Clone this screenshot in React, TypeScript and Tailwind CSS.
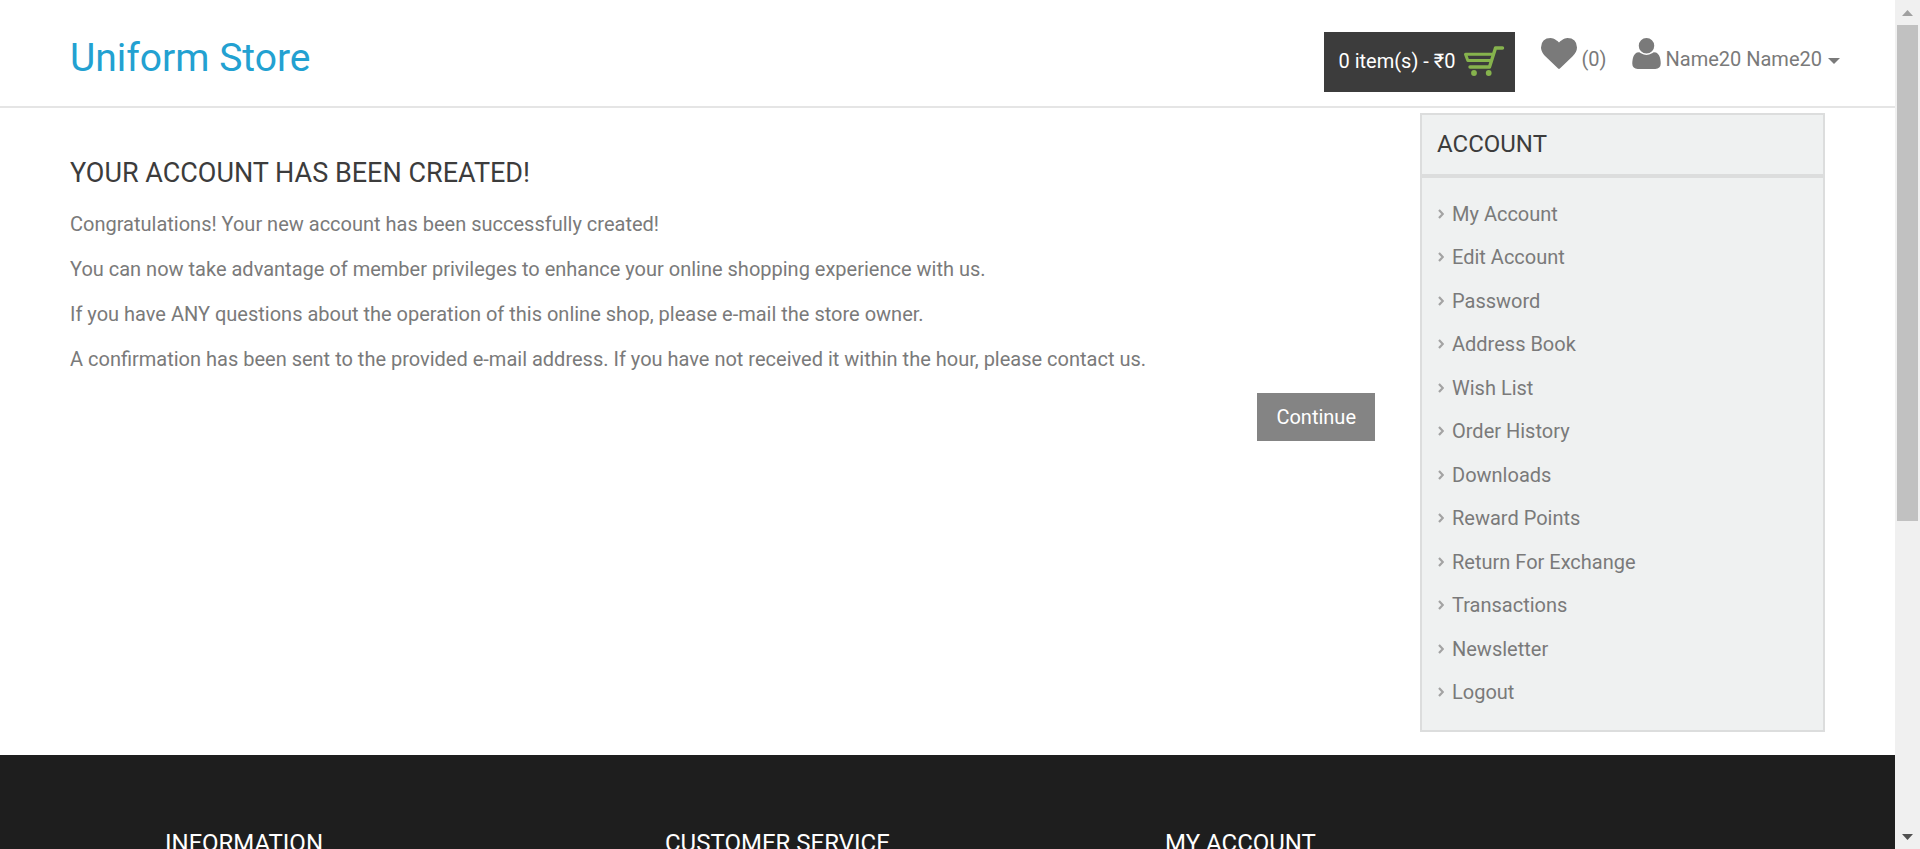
const accountLinks = [
  "My Account",
  "Edit Account",
  "Password",
  "Address Book",
  "Wish List",
  "Order History",
  "Downloads",
  "Reward Points",
  "Return For Exchange",
  "Transactions",
  "Newsletter",
  "Logout",
];

const messages = [
  "Congratulations! Your new account has been successfully created!",
  "You can now take advantage of member privileges to enhance your online shopping experience with us.",
  "If you have ANY questions about the operation of this online shop, please e-mail the store owner.",
  "A confirmation has been sent to the provided e-mail address. If you have not received it within the hour, please contact us.",
];

const footerColumns = ["Information", "Customer Service", "My Account"];

function CartIcon() {
  return (
    <svg
      className="h-[30px] w-[42px]"
      viewBox="0 0 42 30"
      fill="none"
      stroke="#86b34d"
      strokeLinecap="round"
      strokeLinejoin="round"
      aria-hidden="true"
    >
      <path d="M39.500 2H32.500L26.500 21H7" strokeWidth="3.400" />
      <path d="M29 8.300H2.500L4.800 14.500H27" strokeWidth="3" />
      <circle cx="11" cy="27" r="2.900" fill="#86b34d" stroke="none" />
      <circle cx="25.700" cy="27" r="2.900" fill="#86b34d" stroke="none" />
    </svg>
  );
}

function HeartIcon() {
  return (
    <svg className="h-[31px] w-9" viewBox="0 128 1792 1536" fill="currentColor" aria-hidden="true">
      <path d="M896 1664q-26 0-44-18l-624-602q-10-8-27.500-26t-55.500-65.500-68-97.500-53.500-121-23.500-138q0-220 127-344t351-124q62 0 126.500 21.500t120 58 95.500 68.500 76 68q36-36 76-68t95.500-68.500 120-58 126.500-21.500q224 0 351 124t127 344q0 221-229 450l-623 600q-18 18-44 18z" />
    </svg>
  );
}

function UserIcon() {
  return (
    <svg className="h-[31px] w-[29px]" viewBox="128 128 1408 1536" fill="currentColor" aria-hidden="true">
      <path d="M1536 1405q0 120-73 189.500t-194 69.500h-874q-121 0-194-69.500t-73-189.500q0-53 3.500-103.500t14-109 26.500-108.500 43-97.500 62-81 85.500-53.500 111.500-20q9 0 42 21.500t74.500 48 108 48 133.500 21.500 133.500-21.500 108-48 74.500-48 42-21.500q61 0 111.500 20t85.500 53.500 62 81 43 97.500 26.500 108.500 14 109 3.500 103.500zm-320-893q0 159-112.500 271.500t-271.500 112.500-271.500-112.500-112.500-271.500 112.500-271.500 271.500-112.500 271.500 112.500 112.500 271.500z" />
    </svg>
  );
}

function Header() {
  return (
    <header className="flex h-[108px] shrink-0 items-start justify-between border-b-2 border-[#e5e5e5] pl-[70px] pr-[55px] pt-8">
      <a href="#home" className="text-[39px] leading-[52px] text-[#23a1d1]">
        Uniform Store
      </a>
      <div className="flex items-start">
        <button type="button" className="flex h-[60px] items-center gap-2 bg-[#3c3c3c] pb-[2px] pl-[15px] pr-[10px] text-white">
          <span>0 item(s) - ₹0</span>
          <CartIcon />
        </button>
        <a href="#wishlist" className="ml-[26px] flex items-start gap-1 pt-[6px]">
          <HeartIcon />
          <span className="pt-[7px]">(0)</span>
        </a>
        <button type="button" className="ml-[26px] flex items-start gap-1 pt-[6px]">
          <UserIcon />
          <span className="pt-[7px]">Name20 Name20</span>
          <svg className="ml-[2px] mt-5 h-[6px] w-3" viewBox="0 0 12 6" fill="currentColor" aria-hidden="true">
            <path d="M0 0H12L6 6Z" />
          </svg>
        </button>
      </div>
    </header>
  );
}

function AccountMenu() {
  return (
    <aside className="mt-[5px] w-[405px] shrink-0 border-2 border-[#dcdddd] bg-[#eff1f1]">
      <h2 className="border-b-4 border-[#dcdddd] px-[15px] py-[14px] text-2xl leading-[31px] text-[#3c3c3c] uppercase">
        Account
      </h2>
      <ul className="mt-[14px] mb-4 flex h-[522px] flex-col px-4">
        {accountLinks.map((label) => (
          <li key={label} className="flex flex-1 items-center">
            <a href="#account" className="flex items-center gap-2">
              <svg className="h-[10px] w-[6px]" viewBox="0 0 6 10" fill="none" stroke="#a3a3a3" strokeWidth="2.200" aria-hidden="true">
                <path d="M1 1L4.800 5L1 9" />
              </svg>
              {label}
            </a>
          </li>
        ))}
      </ul>
    </aside>
  );
}

function ScrollRail() {
  return (
    <div className="flex w-[25px] shrink-0 flex-col items-center bg-[#f0f0f0]" aria-hidden="true">
      <div className="flex h-[25px] items-center justify-center">
        <svg className="h-[6px] w-[11px]" viewBox="0 0 11 6" fill="#a0a0a0">
          <path d="M0 6L5.500 0L11 6Z" />
        </svg>
      </div>
      <div className="w-[21px] grow-[496] basis-0 bg-[#c1c1c1]" />
      <div className="grow-[303] basis-0" />
      <div className="flex h-[25px] items-center justify-center">
        <svg className="h-[6px] w-[11px]" viewBox="0 0 11 6" fill="#505050">
          <path d="M0 0H11L5.500 6Z" />
        </svg>
      </div>
    </div>
  );
}

export default function App() {
  return (
    <div className="flex h-screen overflow-hidden bg-white font-['Roboto',sans-serif] text-xl leading-7 text-[#7a7a7a]">
      <div className="flex min-w-0 flex-1 flex-col overflow-hidden">
        <Header />
        <div className="flex shrink-0 items-start gap-[45px] px-[70px] pb-[23px]">
          <main className="min-w-0 flex-1 pt-[49px]">
            <h1 className="text-[27px] leading-8 text-[#3c3c3c] uppercase">Your Account Has Been Created!</h1>
            <div className="mt-[21px] flex flex-col gap-[17px]">
              {messages.map((message) => (
                <p key={message}>{message}</p>
              ))}
            </div>
            <div className="mt-5 flex justify-end">
              <a href="#continue" className="flex h-12 items-center bg-[#848484] px-[19px] text-white">
                Continue
              </a>
            </div>
          </main>
          <AccountMenu />
        </div>
        <footer className="flex-1 shrink-0 bg-[#1e1e1e] px-[165px] pt-[72px]">
          <div className="flex">
            {footerColumns.map((title) => (
              <h3 key={title} className="w-[500px] text-2xl text-white uppercase">
                {title}
              </h3>
            ))}
          </div>
        </footer>
      </div>
      <ScrollRail />
    </div>
  );
}
